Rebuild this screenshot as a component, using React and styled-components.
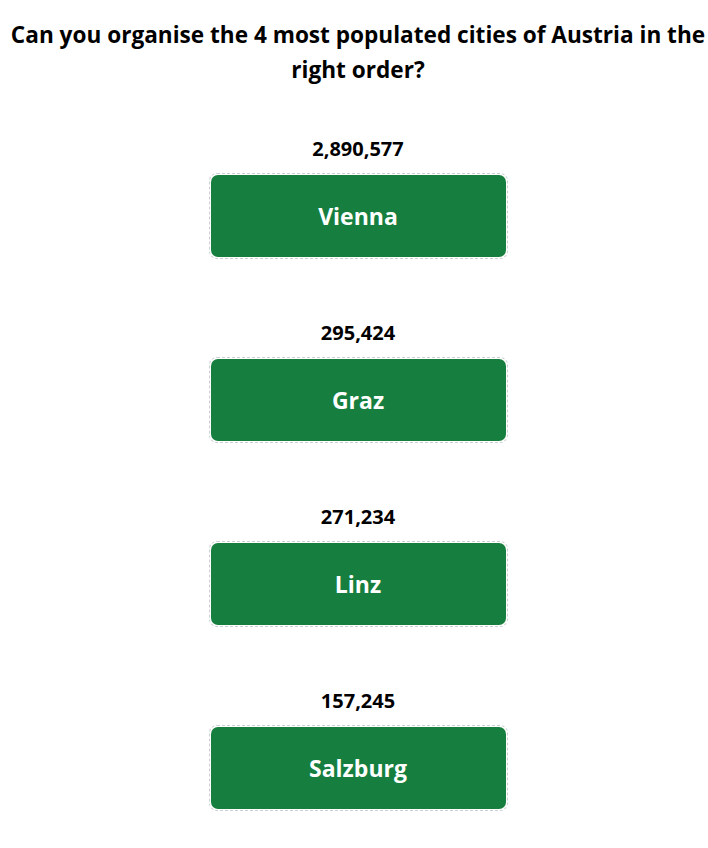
import React from "react";
import styled, { createGlobalStyle } from "styled-components";

const Global = createGlobalStyle`
  html, body { margin: 0; padding: 0; background: #ffffff; }
  body { font-family: "Open Sans", "Noto Sans", sans-serif; color: #000; }
`;

const Page = styled.main`
  display: flex;
  flex-direction: column;
  align-items: center;
  padding: 17px 0 30px 8px;
`;

const Title = styled.h2`
  margin: 0 0 50px;
  font-size: 22.6px;
  line-height: 35px;
  font-weight: 700;
  text-align: center;
  width: 700px;
  white-space: nowrap;
`;

const List = styled.ol`
  list-style: none;
  margin: 0;
  padding: 0;
  display: flex;
  flex-direction: column;
  gap: 62px;
`;

const Item = styled.li`
  display: flex;
  flex-direction: column;
  align-items: center;
  gap: 12px;
`;

const Count = styled.div`
  font-size: 20px;
  line-height: 24px;
  font-weight: 700;
`;

const Slot = styled.div`
  width: 295px;
  padding: 1px;
  border: 1px dashed #cdd0d0;
  border-radius: 8px;
`;

const City = styled.div`
  height: 82px;
  background: #167f3f;
  border-radius: 7px;
  color: #fff;
  font-size: 23px;
  font-weight: 700;
  display: flex;
  align-items: center;
  justify-content: center;
`;

const cities = [
  { name: "Vienna", pop: "2,890,577" },
  { name: "Graz", pop: "295,424" },
  { name: "Linz", pop: "271,234" },
  { name: "Salzburg", pop: "157,245" },
];

export default function App() {
  return (
    <>
      <Global />
      <Page>
        <Title>
          Can you organise the 4 most populated cities of Austria in the
          <br />
          right order?
        </Title>
        <List>
          {cities.map((c) => (
            <Item key={c.name}>
              <Count>{c.pop}</Count>
              <Slot>
                <City>{c.name}</City>
              </Slot>
            </Item>
          ))}
        </List>
      </Page>
    </>
  );
}
